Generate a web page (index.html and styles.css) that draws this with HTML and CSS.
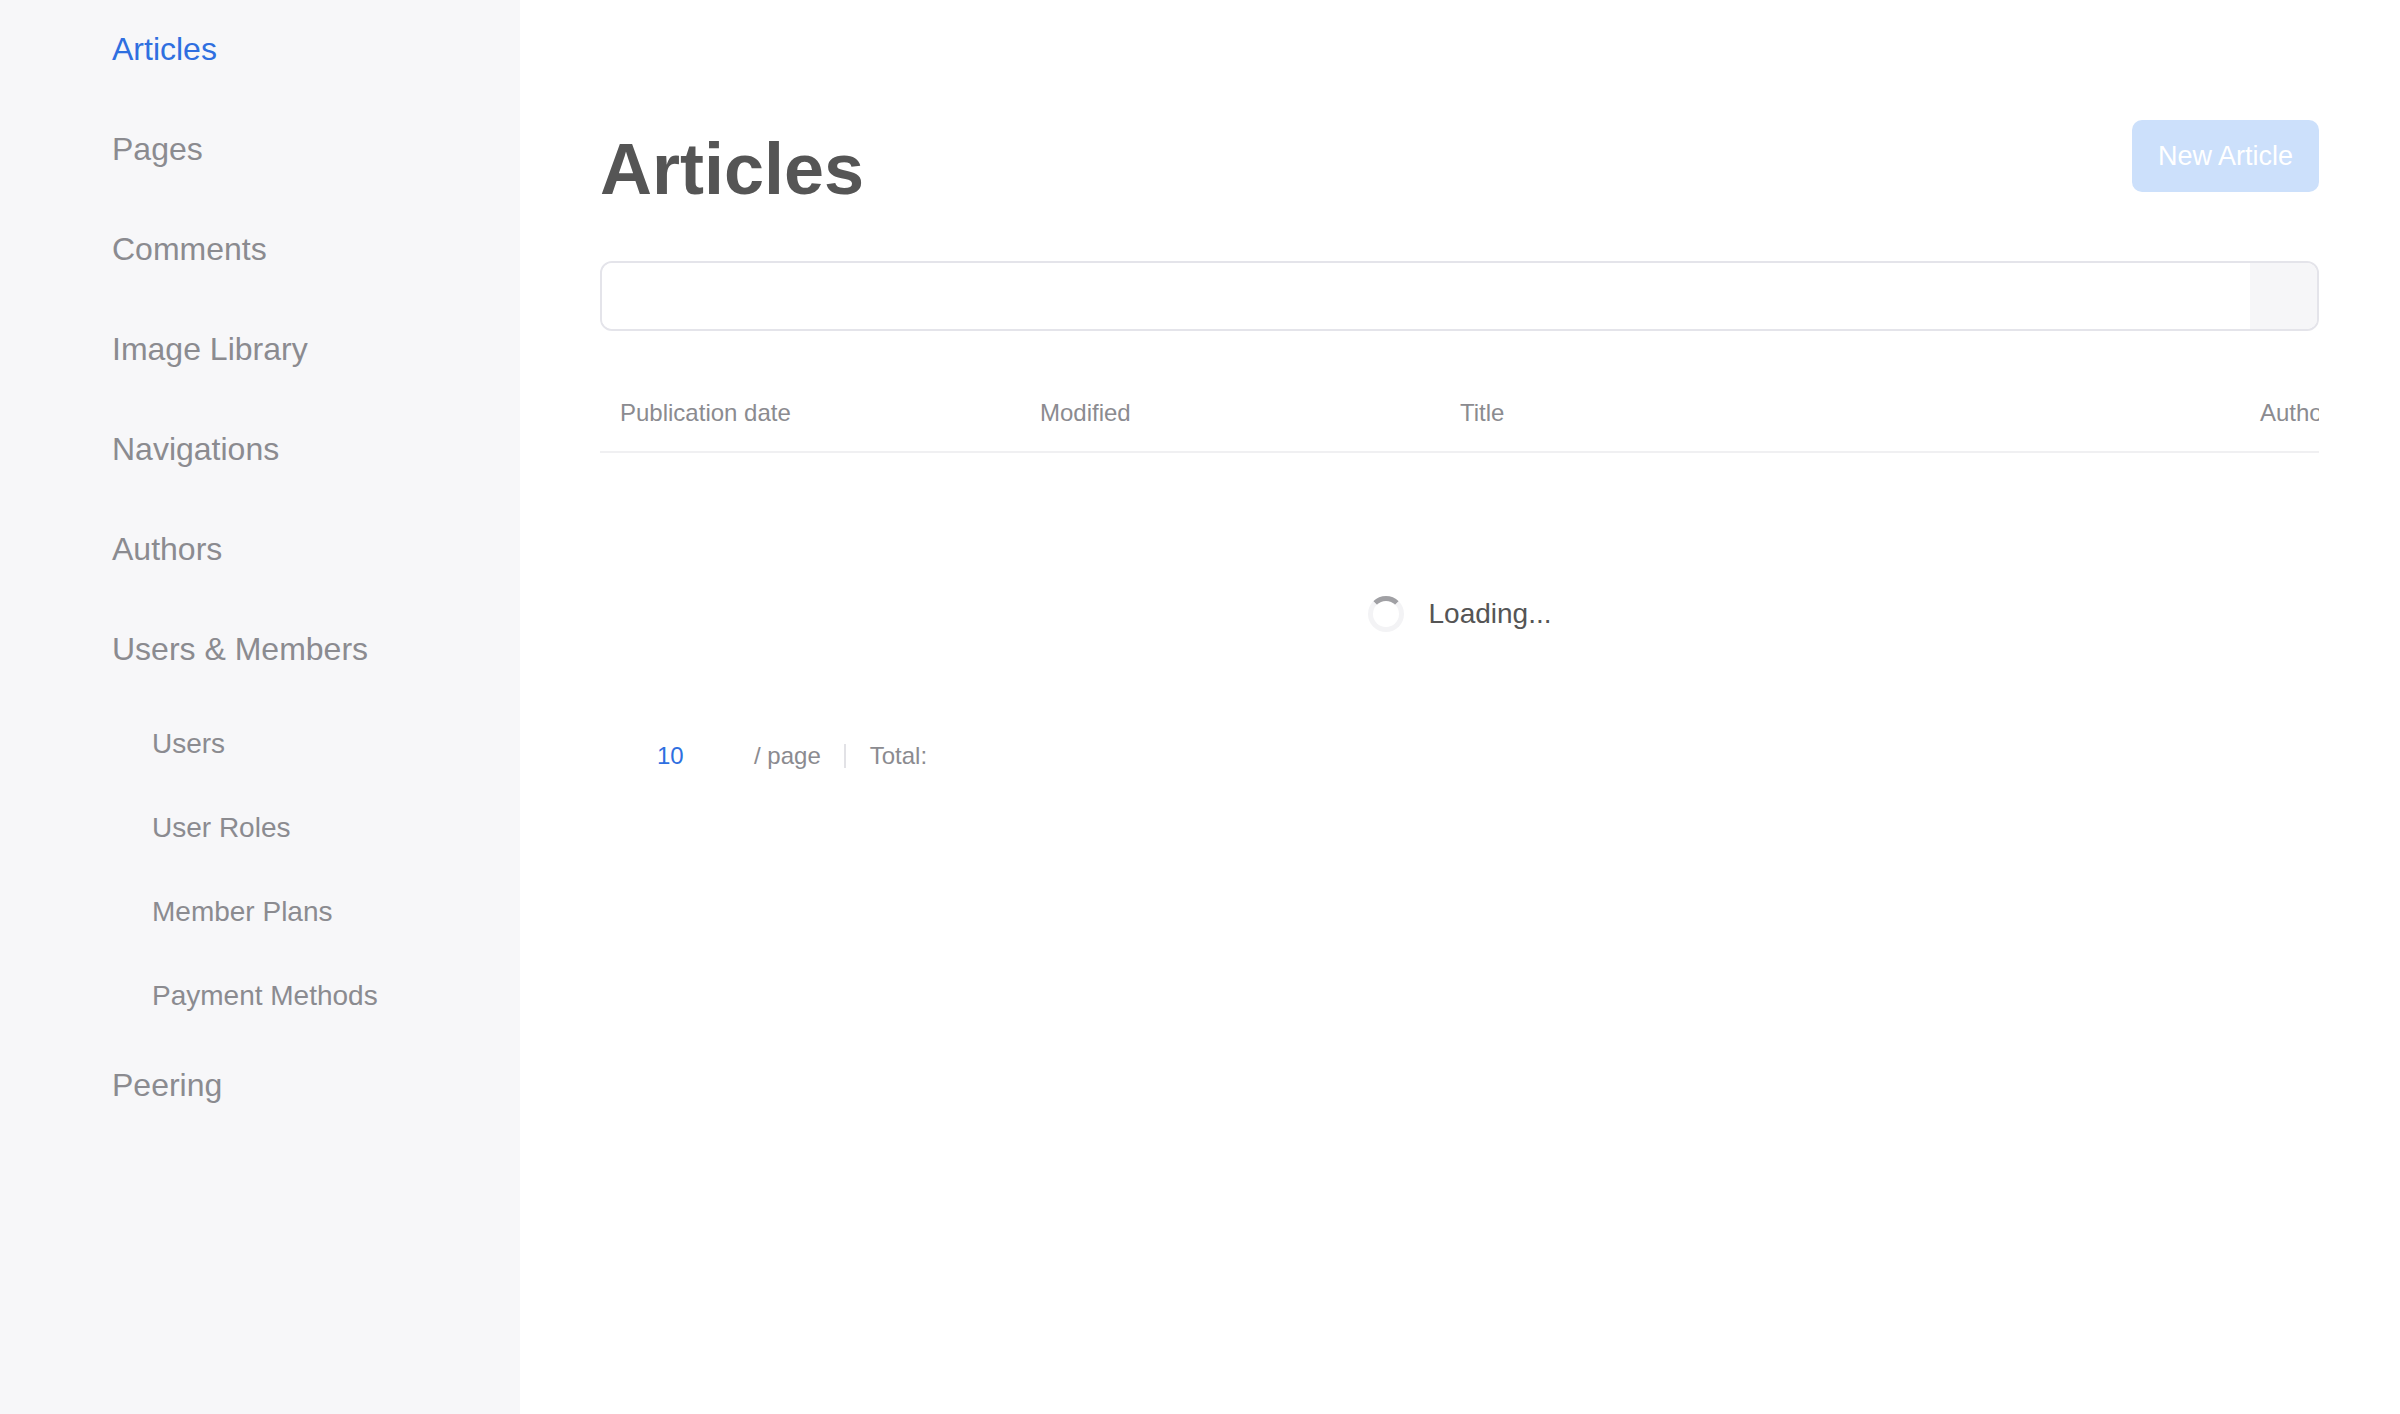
FILE: index.html
```html
<!DOCTYPE html>
<html lang="en">
<head>
<meta charset="utf-8">
<title>Articles</title>
<link rel="stylesheet" href="styles.css">
</head>
<body>
<div class="app">
  <nav class="sidebar">
    <a class="nav-item active" href="#">Articles</a>
    <a class="nav-item" href="#">Pages</a>
    <a class="nav-item" href="#">Comments</a>
    <a class="nav-item" href="#">Image Library</a>
    <a class="nav-item" href="#">Navigations</a>
    <a class="nav-item" href="#">Authors</a>
    <div class="nav-group">
      <a class="nav-item" href="#">Users &amp; Members</a>
      <a class="nav-sub" href="#">Users</a>
      <a class="nav-sub" href="#">User Roles</a>
      <a class="nav-sub" href="#">Member Plans</a>
      <a class="nav-sub" href="#">Payment Methods</a>
    </div>
    <a class="nav-item" href="#">Peering</a>
  </nav>
  <main class="main">
    <div class="page-header">
      <h1 class="page-title">Articles</h1>
      <button class="btn-primary" disabled>New Article</button>
    </div>
    <div class="search">
      <input class="search-input" type="text" aria-label="Search">
      <span class="search-addon"></span>
    </div>
    <div class="table-head">
      <div class="th">Publication date</div>
      <div class="th">Modified</div>
      <div class="th">Title</div>
      <div class="th">Authors</div>
    </div>
    <div class="loading">
      <span class="spinner"></span>
      <span class="loading-text">Loading...</span>
    </div>
    <div class="pagination">
      <span class="page-size">10</span>
      <span class="per-page">/ page</span>
      <span class="divider"></span>
      <span class="total">Total:</span>
    </div>
  </main>
</div>
</body>
</html>
```
FILE: styles.css
```css
html, body {
  margin: 0;
  padding: 0;
  background: #ffffff;
  font-family: "Liberation Sans", Arial, Helvetica, sans-serif;
}

.app {
  display: flex;
  min-height: 1414px;
}

.sidebar {
  width: 520px;
  flex: 0 0 520px;
  background: #f7f7f9;
  display: flex;
  flex-direction: column;
  padding-top: 0;
}

.nav-group {
  display: flex;
  flex-direction: column;
}

.nav-item {
  display: block;
  height: 100px;
  line-height: 99px;
  padding-left: 112px;
  font-size: 32px;
  color: #8b8b90;
  text-decoration: none;
}

.nav-item.active {
  color: #2f6fe0;
}

.nav-sub {
  display: block;
  height: 84px;
  line-height: 87px;
  padding-left: 152px;
  font-size: 28px;
  color: #8b8b90;
  text-decoration: none;
}

.main {
  flex: 1;
  min-width: 0;
  padding: 120px 81px 0 80px;
  display: flex;
  flex-direction: column;
}

.page-header {
  display: flex;
  justify-content: space-between;
  align-items: flex-start;
}

.page-title {
  margin: 13px 0 0 0;
  font-size: 72px;
  line-height: 72px;
  font-weight: 700;
  color: #555555;
}

.btn-primary {
  height: 72px;
  padding: 0 26px;
  border: none;
  border-radius: 10px;
  background: #cce0fb;
  color: #ffffff;
  font-family: inherit;
  font-size: 27px;
}

.search {
  margin-top: 56px;
  height: 70px;
  box-sizing: border-box;
  border: 2px solid #e4e4ea;
  border-radius: 12px;
  display: flex;
  overflow: hidden;
}

.search-input {
  flex: 1;
  border: none;
  outline: none;
  background: #ffffff;
  font-family: inherit;
  font-size: 24px;
  padding: 0 20px;
}

.search-addon {
  width: 67px;
  background: #f6f6f8;
}

.table-head {
  margin-top: 42px;
  display: grid;
  grid-template-columns: 420px 420px 800px 420px;
  overflow: hidden;
  border-bottom: 2px solid #f0f0f2;
}

.th {
  height: 78px;
  line-height: 80px;
  padding-left: 20px;
  font-size: 24px;
  color: #8b8b90;
  white-space: nowrap;
}

.loading {
  padding-top: 143px;
  display: flex;
  justify-content: center;
  align-items: center;
  gap: 25px;
}

.spinner {
  width: 36px;
  height: 36px;
  box-sizing: border-box;
  border: 5px solid #f3f3f5;
  border-top-color: #a0a0a4;
  border-radius: 50%;
}

.loading-text {
  font-size: 28px;
  color: #555555;
}

.pagination {
  margin-top: 100px;
  height: 48px;
  display: flex;
  align-items: center;
  padding-left: 57px;
  font-size: 24px;
}

.page-size {
  width: 97px;
  color: #2f6fe0;
}

.per-page {
  color: #8b8b90;
}

.divider {
  width: 2px;
  height: 24px;
  background: #e2e2e6;
  margin: 0 24px 0 23px;
}

.total {
  color: #8b8b90;
}
```
